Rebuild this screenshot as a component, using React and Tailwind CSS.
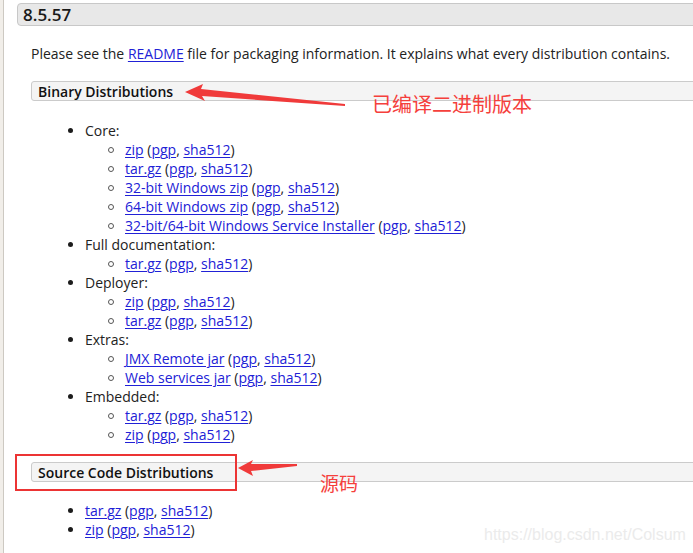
import React from 'react';

// Lien bleu souligné, comme sur la page de téléchargement
const A = ({ children }) => (
  <a href="#" className="text-[#2121d6] underline decoration-1 underline-offset-[2px]">
    {children}
  </a>
);

// Ligne "fichier (pgp, sha512)"
const FileLine = ({ name }) => (
  <>
    <A>{name}</A> (<A>pgp</A>, <A>sha512</A>)
  </>
);

const Disc = () => <span className="w-[5px] h-[5px] rounded-full bg-[#1c1c1c] shrink-0 mr-[12px]" />;
const Circle = () => (
  <span className="w-[6px] h-[6px] rounded-full border border-[#555] shrink-0 mr-[11px]" />
);

const Sub = ({ items }) => (
  <ul className="pl-[40px]">
    {items.map((name) => (
      <li key={name} className="flex items-center h-[19px] whitespace-nowrap">
        <Circle />
        <span>
          <FileLine name={name} />
        </span>
      </li>
    ))}
  </ul>
);

const Group = ({ label, items }) => (
  <li>
    <div className="flex items-center h-[19px]">
      <Disc />
      <span>{label}</span>
    </div>
    <Sub items={items} />
  </li>
);

const binary = [
  { label: 'Core:', items: ['zip', 'tar.gz', '32-bit Windows zip', '64-bit Windows zip', '32-bit/64-bit Windows Service Installer'] },
  { label: 'Full documentation:', items: ['tar.gz'] },
  { label: 'Deployer:', items: ['zip', 'tar.gz'] },
  { label: 'Extras:', items: ['JMX Remote jar', 'Web services jar'] },
  { label: 'Embedded:', items: ['tar.gz', 'zip'] },
];

export default function App() {
  return (
    <div className="relative w-[693px] h-[553px] overflow-hidden bg-white flex font-['Open_Sans',sans-serif] text-[14px] leading-[19px] text-[#222]">
      {/* bord gauche de la fenêtre */}
      <div className="w-[4px] shrink-0 bg-[#f1eee9] border-r border-[#cdc9c2]" />

      <div className="flex-1 min-w-0 pl-[13px] pt-[3px]">
        <h3 className="w-[720px] h-[23px] flex items-center pl-[5px] bg-[#e8e8e8] border border-[#c8c8c8] rounded-l-[4px] text-[17px] font-semibold text-[#1a1a1a]">
          8.5.57
        </h3>

        <div className="pl-[14px]">
          <p className="mt-[18px] whitespace-nowrap">
            Please see the <A>README</A> file for packaging information. It explains what every distribution contains.
          </p>

          <h4 className="mt-[18px] w-[720px] h-[20px] flex items-center pl-[6px] bg-[#f4f4f4] border border-[#cbcbcb] rounded-l-[3px] font-semibold text-[#111]">
            Binary Distributions
          </h4>

          <ul className="mt-[20px] pl-[37px]">
            {binary.map((g) => (
              <Group key={g.label} label={g.label} items={g.items} />
            ))}
          </ul>

          <h4 className="mt-[18px] w-[720px] h-[20px] flex items-center pl-[6px] bg-[#f4f4f4] border border-[#cbcbcb] rounded-l-[3px] font-semibold text-[#111]">
            Source Code Distributions
          </h4>

          <ul className="mt-[19px] pl-[37px]">
            {['tar.gz', 'zip'].map((name) => (
              <li key={name} className="flex items-center h-[19px]">
                <Disc />
                <span>
                  <FileLine name={name} />
                </span>
              </li>
            ))}
          </ul>
        </div>
      </div>

      {/* annotations ajoutées sur la capture */}
      <svg className="absolute left-0 top-0 pointer-events-none" width="693" height="553">
        <polygon points="185,92 203,84 201,89 345,104 345,106 202,96 205,101" fill="#f03a3a" />
        <polygon points="238,468 253,460 251,464 297,464 297,466 251,471 253,476" fill="#f03a3a" />
      </svg>
      <div className="absolute left-[15px] top-[454px] w-[222px] h-[37px] border-2 border-[#ec3434]" />
      <div className="absolute left-[372px] top-[92px] text-[20px] leading-[24px] text-[#f5403c] font-['Noto_Sans_CJK_SC',sans-serif]">
        已编译二进制版本
      </div>
      <div className="absolute left-[320px] top-[471px] text-[19px] leading-[24px] text-[#f5403c] font-['Noto_Sans_CJK_SC',sans-serif]">
        源码
      </div>
      <div className="absolute left-[484px] top-[525px] text-[16px] leading-[20px] text-[#ebebeb] font-['Liberation_Sans',sans-serif]">
        https://blog.csdn.net/Colsum
      </div>
    </div>
  );
}
